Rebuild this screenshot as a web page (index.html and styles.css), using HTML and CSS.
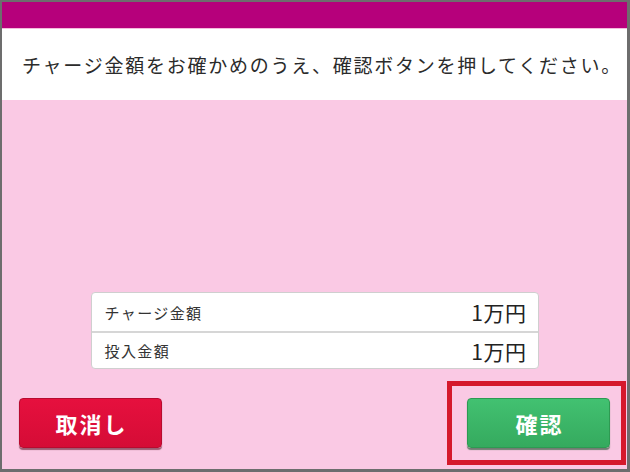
FILE: index.html
```html
<!DOCTYPE html>
<html lang="ja">
<head>
<meta charset="utf-8">
<link rel="stylesheet" href="styles.css">
</head>
<body>
<div class="frame">
  <div class="topbar"></div>
  <div class="message">チャージ金額をお確かめのうえ、確認ボタンを押してください。</div>
  <div class="main">
    <div class="summary">
      <div class="row">
        <span class="label">チャージ金額</span>
        <span class="value">1万円</span>
      </div>
      <div class="row">
        <span class="label">投入金額</span>
        <span class="value">1万円</span>
      </div>
    </div>
    <div class="actions">
      <button class="btn btn-cancel">取消し</button>
      <div class="highlight">
        <button class="btn btn-ok">確認</button>
      </div>
    </div>
  </div>
</div>
</body>
</html>
```

FILE: styles.css
```css
* { box-sizing: border-box; }
html, body {
  margin: 0;
  padding: 0;
  width: 630px;
  height: 472px;
  overflow: hidden;
  font-family: "Noto Sans CJK JP", "Noto Sans", sans-serif;
  color: #333;
}
.frame {
  width: 630px;
  height: 472px;
  border-style: solid;
  border-color: #6d6d6d;
  border-width: 2px 3px 3px 2px;
  display: flex;
  flex-direction: column;
  background: #fac9e4;
}
.topbar {
  height: 27px;
  background: #b6007b;
  border-bottom: 1px solid #f3bcdc;
  flex: none;
}
.message {
  height: 71px;
  flex: none;
  background: #fff;
  font-size: 19px;
  letter-spacing: 1.75px;
  padding: 23px 0 0 20px;
  line-height: 26px;
  color: #2b2b2b;
  white-space: nowrap;
}
.main {
  flex: 1;
  display: flex;
  flex-direction: column;
  align-items: center;
}
.summary {
  margin-top: auto;
  width: 448px;
  background: #fff;
  border: 1px solid #cfcfcf;
  border-radius: 4px;
}
.row {
  height: 38px;
  display: flex;
  align-items: center;
  justify-content: space-between;
  padding: 0 12px 0 13px;
}
.row + .row {
  border-top: 2px solid #d6d6d6;
  height: 37px;
}
.label {
  font-size: 15px;
  letter-spacing: 1.4px;
  color: #333;
}
.value {
  font-size: 21px;
  letter-spacing: 0.5px;
  color: #222;
  margin-right: -1px;
}
.actions {
  align-self: stretch;
  display: flex;
  justify-content: space-between;
  align-items: center;
  margin-top: 12px;
  padding: 0 1px 4px 17px;
}
.btn {
  width: 143px;
  height: 50px;
  border-radius: 4px;
  color: #fff;
  font-family: "Noto Sans CJK JP", sans-serif;
  font-weight: bold;
  font-size: 22px;
  letter-spacing: 2px;
  padding: 0 0 0 2px;
  cursor: pointer;
}
.btn-cancel {
  background: linear-gradient(#e6103e, #d50c36);
  border: 1px solid #b80a2f;
  box-shadow: 0 2px 1px rgba(80, 0, 20, 0.55);
}
.highlight {
  width: 179px;
  height: 84px;
  border: 5px solid #d5192c;
  padding: 12px 11px 12px 15px;
}
.btn-ok {
  background: linear-gradient(#42c171, #35aa5e);
  border: 1px solid #2d9a52;
  box-shadow: 0 2px 1px rgba(0, 60, 20, 0.55);
}
```
